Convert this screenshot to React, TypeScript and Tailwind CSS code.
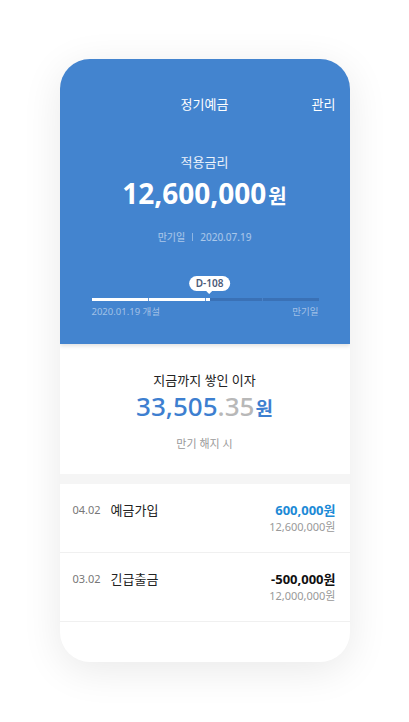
import React from 'react'

type Tx = { date: string, title: string, amount: string, balance: string, deposit: boolean }

const txs: Tx[] = [
    { date: '04.02', title: '예금가입', amount: '600,000원', balance: '12,600,000원', deposit: true },
    { date: '03.02', title: '긴급출금', amount: '-500,000원', balance: '12,000,000원', deposit: false },
]

function ProgressBar({ percent }: { percent: number }) {
    return (
        <div className="relative h-[3px] bg-[#3a71b6]">
            <div className="absolute left-0 top-0 h-[3px] bg-white" style={{ width: `${percent}%` }}></div>
            <div className="absolute top-0 left-[25%] w-px h-[3px] bg-[#6c9cd8]"></div>
            <div className="absolute top-0 left-[50%] w-px h-[3px] bg-[#6c9cd8]"></div>
            <div className="absolute top-0 left-[75%] w-px h-[3px] bg-[#4a82c8]"></div>
            <div className="absolute bottom-[7px] -translate-x-1/2 flex flex-col items-center" style={{ left: `${percent}%` }}>
                <div className="h-[15px] px-[7px] rounded-full bg-white text-[10px] leading-[15px] font-semibold text-[#4b5a78]">D-108</div>
                <div className="w-0 h-0 border-l-[3px] border-r-[3px] border-t-[3px] border-l-transparent border-r-transparent border-t-white"></div>
            </div>
        </div>
    )
}

export default function App() {
    return (
        <div className="w-[409px] h-[722px] bg-white pt-[59px] font-['Noto_Sans','Noto_Sans_CJK_KR',sans-serif]">
            <div className="mx-auto w-[290px] h-[603px] rounded-[30px] overflow-hidden bg-white shadow-[0_8px_40px_rgba(0,0,0,0.09)] flex flex-col">
                <div className="relative z-10 h-[285px] bg-[#4384cf] shadow-[0_2px_4px_rgba(0,0,0,0.12)] flex flex-col">
                    <div className="grid grid-cols-[1fr_auto_1fr] pt-[36px] text-[13px] leading-[18px] text-white">
                        <div></div>
                        <div>정기예금</div>
                        <div className="justify-self-end pr-[14px]">관리</div>
                    </div>
                    <div className="mt-[40px] text-center text-[13px] leading-[18px] text-white/90">적용금리</div>
                    <div className="mt-[4px] flex justify-center items-baseline leading-[36px] text-white font-bold">
                        <span className="text-[28px]">12,600,000</span>
                        <span className="text-[20px] ml-[2px]">원</span>
                    </div>
                    <div className="mt-[14px] flex justify-center items-center gap-[7px] text-[10px] leading-[16px] text-white/55">
                        <span>만기일</span>
                        <span className="w-px h-[8px] bg-white/40"></span>
                        <span>2020.07.19</span>
                    </div>
                    <div className="mt-[53px] pl-[32px] pr-[31px]">
                        <ProgressBar percent={52} />
                        <div className="mt-[4px] flex justify-between text-[9.5px] leading-[14px] text-white/50">
                            <span>2020.01.19 개설</span>
                            <span>만기일</span>
                        </div>
                    </div>
                </div>

                <div className="h-[130px] flex flex-col items-center">
                    <div className="pt-[27px] text-[13px] leading-[18px] text-[#222]">지금까지 쌓인 이자</div>
                    <div className="mt-[1px] flex items-baseline leading-[32px] font-medium">
                        <span className="text-[26px] text-[#3d7fd0]">33,505</span>
                        <span className="text-[26px] text-[#b8b8b8]">.35</span>
                        <span className="text-[19px] font-bold text-[#3d7fd0] ml-[1px]">원</span>
                    </div>
                    <div className="mt-[11px] text-[11px] leading-[16px] text-[#999]">만기 해지 시</div>
                </div>

                <div className="h-[10px] bg-[#f5f5f5]"></div>

                <div className="flex flex-col">
                    {txs.map(tx => (
                        <div key={tx.date} className="h-[69px] border-b border-[#f0f0f0] flex justify-between pl-[13px] pr-[14px] pt-[17px]">
                            <div className="flex items-start leading-[18px]">
                                <span className="w-[41px] text-[11px] text-[#777]">{tx.date}</span>
                                <span className="text-[13px] text-[#222] -ml-[3px]">{tx.title}</span>
                            </div>
                            <div className="flex flex-col items-end">
                                <span className={`text-[13px] leading-[18px] font-bold ${tx.deposit ? 'text-[#1c8ad6]' : 'text-[#111]'}`}>{tx.amount}</span>
                                <span className="text-[11px] leading-[16px] text-[#999]">{tx.balance}</span>
                            </div>
                        </div>
                    ))}
                </div>
            </div>
        </div>
    )
}
